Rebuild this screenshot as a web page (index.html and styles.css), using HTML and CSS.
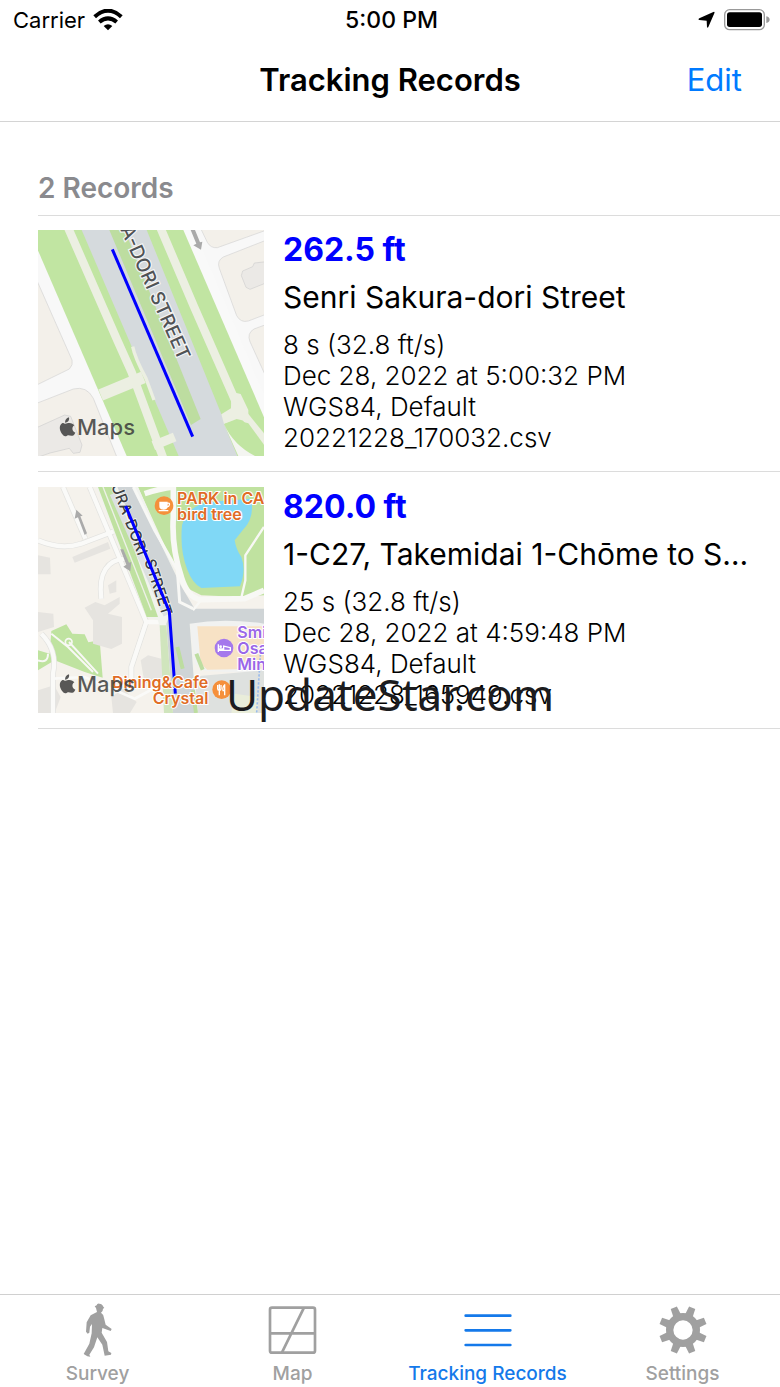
FILE: index.html
```html
<!DOCTYPE html>
<html lang="en">
<head>
  <meta charset="UTF-8">
  <meta name="viewport" content="width=device-width, initial-scale=1">
  <title>Tracking Records</title>
  <link rel="stylesheet" href="styles.css">
</head>
<body>
  <div class="screen">
    <div class="status-bar">
      <div class="status-left">
        <span>Carrier</span>
        <svg width="30" height="22" viewBox="0 0 90 66" aria-hidden="true">
          <g fill="none" stroke="#000" stroke-width="12">
            <path d="M5 23Q45-13 85 23"/>
            <path d="M19 39Q45 17 71 39"/>
          </g>
          <path d="M32 51Q45 40 58 51L45 64Z"/>
        </svg>
      </div>
      <div class="status-time">5:00 PM</div>
      <div class="status-right">
        <svg width="18" height="18" viewBox="0 0 54 54" aria-hidden="true">
          <path d="M46 3Q51 1 49 7L31 48Q29 52 27 48L26 29L4 27Q-1 25 4 22Z"/>
        </svg>
        <svg width="46" height="22" viewBox="0 0 138 66" aria-hidden="true">
          <rect x="2" y="2" width="119" height="60" rx="15" fill="none" stroke="#999" stroke-width="4"/>
          <rect x="9" y="10" width="105" height="44" rx="8"/>
          <path d="M127 22Q137 25 137 32T127 42Z" fill="#999"/>
        </svg>
      </div>
    </div>

    <header class="nav-bar">
      <h1>Tracking Records</h1>
      <button class="edit-btn" type="button">Edit</button>
    </header>

    <main class="records">
      <h2>2 Records</h2>

      <article class="record">
        <svg class="map" viewBox="24 195 678 678" role="img" aria-label="Map of Senri Sakura-dori Street">
          <rect x="24" y="195" width="678" height="678" fill="#f8f8f8"/>
          <!-- blocks -->
          <g fill="#f3f0ea" stroke="#d3d3d3" stroke-width="2">
            <path d="M20 345L126 585Q130 600 118 612L20 660Z"/>
            <path d="M20 715L130 672Q170 662 190 700L262 880H20Z"/>
            <path d="M512 190L532 232Q542 250 562 248L710 195V190Z"/>
            <path d="M710 225L580 276Q560 287 568 310L620 452Q632 474 655 468L710 447Z"/>
            <path d="M710 478L672 492Q650 505 660 530L710 640Z"/>
          </g>
          <g fill="#ebe9e6" stroke="#cfcfcf" stroke-width="2">
            <path d="M710 290L673 294L668 305L638 318L634 332L648 367L660 373L710 353Z"/>
            <path d="M20 788L104 750L122 754L156 840L150 862L130 865L118 850L60 864L20 878Z"/>
          </g>
          <!-- grass verges -->
          <path d="M24 195H470L702 750V873H290L22 252Z" fill="#c1e5a2"/>
          <path d="M155 195H350L625 873H446Z" fill="#d5dadd"/>
          <path d="M238 195H284L512 762L483 780Z" fill="#bddda0"/>
          <!-- footpaths -->
          <g fill="none" stroke="#ecefe2" stroke-width="25">
            <path d="M115 190L262 526L305 622L400 880"/>
            <path d="M392 190L492 425L618 712"/>
            <path d="M212 690L340 637" stroke-width="36"/>
            <path d="M308 545Q315 580 348 640L372 705" stroke-width="10"/>
            <path d="M370 842L434 816" stroke-width="28"/>
            <path d="M640 748L710 835"/>
          </g>
          <path d="M604 680L632 687L655 735L655 770L620 762L582 777L574 748L603 730Z" fill="#ecefe2"/>
          <path d="M460 195H492L710 710V775Z" fill="#f9f9f9"/>
          <path d="M582 777L620 766L655 775L710 850V880H625Z" fill="#c1e5a2"/>
          <path d="M582 777L625 873H675Q610 840 582 777Z" fill="#f4f5f1"/>
          <!-- direction arrow -->
          <path d="M482 195H495L510 232L517 230L513 254L490 241L499 236Z" fill="#aaa"/>
          <text class="street" transform="translate(270 192) rotate(66)" font-size="57">A-DORI STREET</text>
          <path d="M247 253L488 815" stroke="#00f" stroke-width="9"/>
          <g class="map-brand">
            <path d="M117 757C119 767 113 773 105 773C105 765 109 759 117 757ZM104 776C109 777 112 774 118 774C125 774 130 777 133 781C124 787 126 799 136 803C132 812 128 812 124 812C119 812 116 809 111 812C106 815 101 814 97 808C89 798 87 785 93 778C97 773 101 774 104 776Z"/>
            <text x="141" y="810">Maps</text>
          </g>
        </svg>
        <div class="info">
          <div class="distance">262.5 ft</div>
          <div class="place">Senri Sakura-dori Street</div>
          <div class="detail">8 s (32.8 ft/s)</div>
          <div class="detail">Dec 28, 2022 at 5:00:32 PM</div>
          <div class="detail">WGS84, Default</div>
          <div class="detail">20221228_170032.csv</div>
        </div>
      </article>

      <article class="record">
        <svg class="map" viewBox="0 0 678 678" role="img" aria-label="Map of Takemidai">
          <rect width="678" height="678" fill="#f5f2ec"/>
          <!-- parkland and pond -->
          <path d="M300 0H678V325L610 330L490 325L440 300L400 220Z" fill="#c0e2a0"/>
          <path d="M432 115Q445 60 510 45L640 35Q650 95 615 128L590 160Q595 190 610 210Q625 250 606 298L490 303Q464 290 448 248Q425 190 432 115Z" fill="#80d8f6"/>
          <path d="M40 432L85 412L103 440L140 442L151 466L185 460L194 572L140 555L50 520L0 550V490L35 500Z" fill="#bfe3a0"/>
          <!-- hotel block and car parks -->
          <path d="M455 400L678 392V560L500 552L470 530Z" fill="#f1f2f1"/>
          <path d="M478 418H678V545L508 548L488 530Z" fill="#f7e2c5"/>
          <path d="M450 570L678 550V678H460Z" fill="#dee1df"/>
          <path d="M590 620L660 630V678H580Z" fill="#e9edda"/>
          <!-- buildings -->
          <g fill="#e6e4e0">
            <path d="M0 205L36 212L38 262H0Z"/>
            <path d="M0 375L46 380L48 420L0 435Z"/>
            <path d="M103 210L210 165L217 185L110 227Z"/>
            <path d="M140 362L172 345L200 355L245 330V350L210 380L252 390V470L220 486L165 470V400Z"/>
            <path d="M308 520L330 505L370 515L380 570L320 590Z"/>
            <path d="M0 610L48 595L68 630L50 678H0Z"/>
            <path d="M210 295L235 280V315L215 320Z"/>
            <path d="M220 630L255 605L296 645L276 678H225Z"/>
          </g>
          <!-- lanes -->
          <g fill="none" stroke="#e2e2df" stroke-width="17">
            <path d="M0 160Q70 190 130 170L228 133"/>
            <path d="M75 0L142 155"/>
            <path d="M190 335C180 255 210 218 262 215"/>
            <path d="M155 0L325 405"/>
            <path d="M325 405L300 480L280 540V575"/>
            <path d="M10 440Q60 490 45 560V678"/>
          </g>
          <g fill="none" stroke="#fafaf8" stroke-width="13">
            <path d="M0 160Q70 190 130 170L228 133"/>
            <path d="M75 0L142 155"/>
            <path d="M190 335C180 255 210 218 262 215"/>
            <path d="M155 0L325 405H380"/>
            <path d="M325 405L300 480L280 540V575"/>
            <path d="M10 440Q60 490 45 560V678"/>
            <path d="M45 575L140 570L290 635L355 600" stroke-width="8"/>
          </g>
          <!-- main road -->
          <path d="M175 0H300L450 345L480 678H420L360 400L325 390Z" fill="#f1f3ee"/>
          <path d="M180 0H222L360 390H326Z" fill="#bfe1a0"/>
          <path d="M195 0L340 370" fill="none" stroke="#eef1e7" stroke-width="4"/>
          <path d="M238 0H286L428 295L470 365H678V410Q560 392 455 410L475 678H405L385 410L400 370Z" fill="#cfd4d6"/>
          <path d="M224 20L385 385" fill="none" stroke="#dce0e1" stroke-width="18"/>
          <path d="M365 415H385L405 678H378Z" fill="#d0e5bd"/>
          <path d="M418 480L434 545M475 500L494 548M465 610L474 678" fill="none" stroke="#bddda0" stroke-width="12"/>
          <!-- park footpaths -->
          <g fill="none" stroke="#f8f8f5" stroke-width="9">
            <path d="M320 20Q365 5 406 0V90Q400 180 430 270Q450 335 490 338L620 335L678 310" stroke-width="17"/>
            <path d="M286 0L350 130L418 250L425 345L465 365"/>
            <path d="M465 370L490 338M610 332L622 280V205L678 120" stroke-width="7"/>
            <path d="M93 465L180 560M40 440L90 480L165 555M0 520Q30 530 30 500" stroke-width="6"/>
            <circle cx="92" cy="465" r="10" stroke-width="5"/>
          </g>
          <path d="M668 490L656 678" stroke="#9abbed" stroke-width="5" stroke-dasharray="7 5"/>
          <!-- direction arrows -->
          <g fill="#aaa">
            <path d="M115 68L134 86L127 88L147 139L140 144L120 91L110 95Z"/>
            <path d="M247 187H256L273 227L280 225L277 253L256 239L265 233Z"/>
          </g>
          <text class="street street-small" transform="translate(219 -4) rotate(69)">URA-DORI</text>
          <text class="street street-small" transform="translate(319 222) rotate(72)">STREET</text>
          <path d="M263 57L394 374L412 620" fill="none" stroke="#00f" stroke-width="9"/>
          <!-- places -->
          <g class="poi">
            <circle cx="378" cy="56" r="28"/>
            <text x="417" y="50">PARK in CAFE</text>
            <text x="417" y="98">bird tree</text>
            <circle cx="551" cy="608" r="28"/>
            <text x="511" y="602" text-anchor="end">Dining&amp;Cafe</text>
            <text x="511" y="650" text-anchor="end">Crystal</text>
          </g>
          <g fill="none" stroke="#fff" stroke-width="4">
            <path d="M366 46H387V58Q387 66 377 66Q366 66 366 58Z" fill="#fff"/>
            <path d="M387 49Q396 47 394 54Q393 60 386 59M362 71H391"/>
            <path d="M539 594V605Q539 610 544 610Q549 610 549 605V594M544 592V625M560 592V625M560 593Q553 600 555 611H560"/>
          </g>
          <g class="poi hotel">
            <circle cx="558" cy="483" r="28"/>
            <text x="598" y="453">Smile</text>
            <text x="598" y="501">Osaka</text>
            <text x="598" y="549">Minami</text>
          </g>
          <path d="M541 472V495M541 490H577V482L557 477V486H542" fill="none" stroke="#fff" stroke-width="4"/>
          <circle cx="548" cy="479" r="4" fill="#fff"/>
          <g class="map-brand" transform="translate(-24 -195)">
            <path d="M117 757C119 767 113 773 105 773C105 765 109 759 117 757ZM104 776C109 777 112 774 118 774C125 774 130 777 133 781C124 787 126 799 136 803C132 812 128 812 124 812C119 812 116 809 111 812C106 815 101 814 97 808C89 798 87 785 93 778C97 773 101 774 104 776Z"/>
            <text x="141" y="810">Maps</text>
          </g>
        </svg>
        <div class="info">
          <div class="distance">820.0 ft</div>
          <div class="place">1-C27, Takemidai 1-Chōme to Senri</div>
          <div class="detail">25 s (32.8 ft/s)</div>
          <div class="detail">Dec 28, 2022 at 4:59:48 PM</div>
          <div class="detail">WGS84, Default</div>
          <div class="detail">20221228_165949.csv</div>
        </div>
      </article>
    </main>

    <nav class="tab-bar">
      <a href="#survey">
        <svg width="54" height="54" viewBox="-9 15 162 162" fill="currentColor" aria-hidden="true">
          <path d="M62 25L68 22Q69 16 76 17Q85 17 87 25L91 30L87 32Q87 41 81 44Q89 49 90 60L95 80L113 93L110 99L85 90L83 104L99 132L103 160L112 165L111 170L92 173L85 140L70 118L60 148L46 170L49 176L40 175L29 168L46 137L53 106L54 78L48 86L46 104L41 107L36 101L38 73L50 52L69 42L66 30Z"/>
        </svg>
        <span>Survey</span>
      </a>
      <a href="#map">
        <svg width="54" height="54" viewBox="0 0 162 162" fill="none" stroke="currentColor" stroke-width="8" aria-hidden="true">
          <rect x="12" y="14" width="135" height="135" rx="6"/>
          <path d="M12 91H147M114 14L48 148"/>
        </svg>
        <span>Map</span>
      </a>
      <a class="active" href="#records" aria-current="page">
        <svg width="54" height="54" viewBox="0 0 162 162" fill="none" stroke="currentColor" stroke-width="8" stroke-linecap="round" aria-hidden="true">
          <path d="M14 38H148M14 82H148M14 126H148"/>
        </svg>
        <span>Tracking Records</span>
      </a>
      <a href="#settings">
        <svg width="54" height="54" viewBox="-81 -81 162 162" fill="none" stroke="currentColor" aria-hidden="true">
          <circle r="40" stroke-width="22"/>
          <g fill="currentColor" stroke="none">
            <path id="tooth" d="M-12-46L-10-72H10L12-46Z" transform="rotate(22.5)"/>
            <use href="#tooth" transform="rotate(45)"/>
            <use href="#tooth" transform="rotate(90)"/>
            <use href="#tooth" transform="rotate(135)"/>
            <use href="#tooth" transform="rotate(180)"/>
            <use href="#tooth" transform="rotate(225)"/>
            <use href="#tooth" transform="rotate(270)"/>
            <use href="#tooth" transform="rotate(315)"/>
          </g>
        </svg>
        <span>Settings</span>
      </a>
    </nav>

    <div class="watermark">UpdateStar.com</div>
  </div>
</body>
</html>
```
FILE: styles.css
```css
* {
  box-sizing: border-box;
}

body {
  margin: 0;
  font-family: Inter, "Liberation Sans", sans-serif;
  background: #fff;
  color: #000;
}

.screen {
  position: relative;
  display: flex;
  flex-direction: column;
  min-height: 100vh;
}

.status-bar {
  display: grid;
  grid-template-columns: 1fr auto 1fr;
  align-items: center;
  height: 40px;
  padding: 0 10px 0 13px;
  font-size: 22px;
}

.status-left,
.status-right {
  display: flex;
  align-items: center;
  gap: 8px;
}

.status-right {
  justify-content: flex-end;
}

.status-time {
  font-size: 23px;
  font-weight: 500;
}

.nav-bar {
  display: grid;
  grid-template-columns: 1fr auto 1fr;
  align-items: center;
  height: 82px;
  padding: 0 38px 2px;
  border-bottom: 1px solid #d4d4d4;
}

.nav-bar h1 {
  grid-column: 2;
  margin: 0;
  font-size: 31px;
  font-weight: 600;
}

.edit-btn {
  justify-self: end;
  padding: 0;
  border: none;
  background: none;
  color: #007aff;
  font-family: inherit;
  font-size: 31px;
  cursor: pointer;
}

.records {
  flex: 1;
  padding-left: 38px;
}

.records h2 {
  margin: 0;
  padding: 50px 0 10px;
  border-bottom: 1px solid #dcdcdc;
  color: #8a8a8e;
  font-size: 28px;
  line-height: 33px;
  font-weight: 600;
}

.record {
  display: flex;
  gap: 19px;
  padding: 14px 24px 15px 0;
  border-bottom: 1px solid #dcdcdc;
}

.record + .record {
  padding-top: 15px;
}

.map {
  flex: none;
  width: 226px;
  height: 226px;
}

.street {
  fill: #505355;
  stroke: #f4f5f5;
  stroke-width: 7px;
  paint-order: stroke;
  font-weight: 500;
}

.street-small {
  fill: #3c3f41;
  stroke-width: 4px;
  font-size: 46px;
}

.map-brand {
  fill: #3c3c3c;
  fill-opacity: 0.85;
  font-size: 66px;
  font-weight: 500;
}

.poi {
  fill: #e06c26;
  font-size: 48px;
  font-weight: 600;
}

.poi text {
  stroke: #fff;
  stroke-width: 6px;
  paint-order: stroke;
}

.poi circle {
  fill: #f5903b;
}

.hotel {
  fill: #9a66e8;
}

.hotel circle {
  fill: #a578ec;
}

.info {
  flex: 1;
  min-width: 0;
}

.distance {
  color: #00f;
  font-size: 32px;
  line-height: 40px;
  font-weight: 700;
}

.place {
  margin: 7px 0 12px;
  overflow: hidden;
  font-size: 30px;
  line-height: 40px;
  text-overflow: ellipsis;
  white-space: nowrap;
}

.detail {
  font-size: 26px;
  line-height: 31px;
  font-weight: 300;
}

.tab-bar {
  display: grid;
  grid-template-columns: repeat(4, 1fr);
  padding: 8px 0 1px;
  border-top: 1px solid #d0d0d0;
}

.tab-bar a {
  display: flex;
  flex-direction: column;
  align-items: center;
  gap: 4px;
  color: #a0a0a0;
  font-size: 19px;
  line-height: 25px;
  font-weight: 500;
  text-decoration: none;
}

.tab-bar a.active {
  color: #1479ea;
}

.watermark {
  position: absolute;
  inset: 0;
  display: flex;
  align-items: center;
  justify-content: center;
  color: #1c1c1e;
  font-family: "Noto Sans", "Open Sans", sans-serif;
  font-size: 44px;
  pointer-events: none;
}
```
